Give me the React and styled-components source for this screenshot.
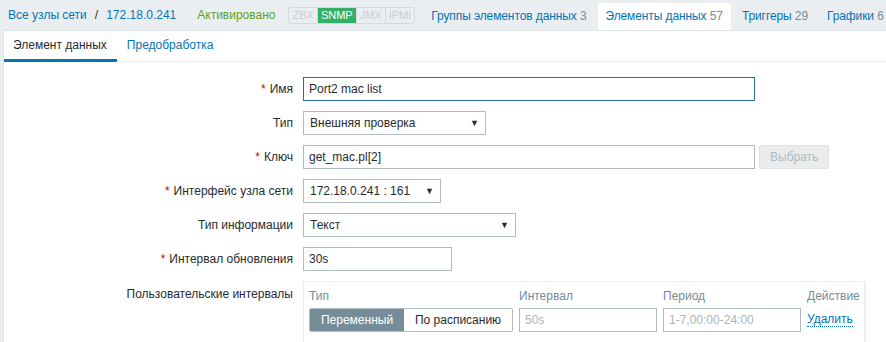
import React from 'react';
import styled, { createGlobalStyle } from 'styled-components';

const GlobalStyle = createGlobalStyle`
    body {
        margin: 0;
        background: #ebeef0;
        font-family: "Liberation Sans", Arial, sans-serif;
        font-size: 12px;
        color: #1f2c33;
    }
`

const badges = [
    { name: "ZBX", on: false },
    { name: "SNMP", on: true },
    { name: "JMX", on: false },
    { name: "IPMI", on: false },
];

const navItems = [
    { title: "Группы элементов данных", count: 3 },
    { title: "Элементы данных", count: 57, active: true },
    { title: "Триггеры", count: 29 },
    { title: "Графики", count: 6 },
];

const rows = [
    { label: "Имя", req: true, kind: "input", value: "Port2 mac list", width: 452, focus: true },
    { label: "Тип", kind: "select", value: "Внешняя проверка", width: 183 },
    { label: "Ключ", req: true, kind: "input", value: "get_mac.pl[2]", width: 452, button: "Выбрать" },
    { label: "Интерфейс узла сети", req: true, kind: "select", value: "172.18.0.241 : 161", width: 138 },
    { label: "Тип информации", kind: "select", value: "Текст", width: 213 },
    { label: "Интервал обновления", req: true, kind: "input", value: "30s", width: 149 },
];

class App extends React.Component {
    renderRow = (row) => (
        <React.Fragment key={row.label}>
            <Label>
                {row.req && <Star>*</Star>}
                {row.label}
            </Label>
            <Field>
                {row.kind === "input" ? (
                    <TextBox w={row.width} focus={row.focus} readOnly value={row.value} />
                ) : (
                    <Select w={row.width}>
                        <span>{row.value}</span>
                        <Arrow>▼</Arrow>
                    </Select>
                )}
                {row.button && <Button disabled>{row.button}</Button>}
            </Field>
        </React.Fragment>
    );

    render() {
        return (
            <>
                <GlobalStyle />
                <TopBar>
                    <Crumbs>
                        <Link>Все узлы сети</Link>
                        <Slash>/</Slash>
                        <Link>172.18.0.241</Link>
                    </Crumbs>
                    <Status>Активировано</Status>
                    <Badges>
                        {badges.map((b) => (
                            <Badge key={b.name} on={b.on}>{b.name}</Badge>
                        ))}
                    </Badges>
                    <Nav>
                        {navItems.map((n) => (
                            <NavItem key={n.title} active={n.active}>
                                {n.title} <Count>{n.count}</Count>
                            </NavItem>
                        ))}
                    </Nav>
                </TopBar>
                <Panel>
                    <Tabs>
                        <Tab active>Элемент данных</Tab>
                        <Tab>Предобработка</Tab>
                    </Tabs>
                    <Form>
                        {rows.map(this.renderRow)}
                        <Label top>Пользовательские интервалы</Label>
                        <Field>
                            <Intervals>
                                <Head>Тип</Head>
                                <Head>Интервал</Head>
                                <Head>Период</Head>
                                <Head>Действие</Head>
                                <Segment>
                                    <SegItem active>Переменный</SegItem>
                                    <SegItem>По расписанию</SegItem>
                                </Segment>
                                <TextBox w={138} placeholder="50s" readOnly />
                                <TextBox w={138} placeholder="1-7,00:00-24:00" readOnly />
                                <Remove>Удалить</Remove>
                            </Intervals>
                        </Field>
                    </Form>
                </Panel>
            </>
        )
    }
}

const TopBar = styled.div`
    display: flex;
    align-items: center;
    height: 30px;
    padding-left: 8px;
    white-space: nowrap;
    overflow: hidden;
`
const Crumbs = styled.div`
    display: flex;
    align-items: center;
`
const Link = styled.span`
    color: #0275b8;
`
const Slash = styled.span`
    margin: 0 8px;
    color: #1f2c33;
`
const Status = styled.span`
    color: #59a22b;
    margin-left: 21px;
`
const Badges = styled.div`
    display: flex;
    margin-left: 13px;
    border: 1px solid #d5d9dc;
    border-radius: 2px;
`
const Badge = styled.span`
    padding: 1px 3px;
    line-height: 13px;
    font-size: 11px;
    color: ${(p) => (p.on ? "#fff" : "#c8ced2")};
    background: ${(p) => (p.on ? "#34af67" : "transparent")};
    border-left: 1px solid #d5d9dc;
    &:first-child {
        border-left: none;
    }
`
const Nav = styled.div`
    display: flex;
    align-items: center;
    margin-left: 8px;
`
const NavItem = styled.span`
    color: #0275b8;
    padding: 0 8px;
    height: 27px;
    margin-top: 3px;
    line-height: 26px;
    margin-right: 3px;
    letter-spacing: -0.1px;
    background: ${(p) => (p.active ? "#fff" : "transparent")};
    border-radius: 2px 2px 0 0;
`
const Count = styled.span`
    color: #768d99;
`
const Panel = styled.div`
    margin-left: 3px;
    height: 312px;
    background: #fff;
    border: 1px solid #dfe4e7;
    border-right: none;
    border-bottom: none;
    box-sizing: border-box;
`
const Tabs = styled.div`
    display: flex;
    height: 30px;
    border-bottom: 1px solid #ebeef0;
`
const Tab = styled.div`
    padding: 0 10px 0 9px;
    margin-right: 1px;
    line-height: 28px;
    font-size: 12px;
    color: ${(p) => (p.active ? "#1f2c33" : "#0275b8")};
    border-bottom: 3px solid ${(p) => (p.active ? "#0275b8" : "transparent")};
    margin-bottom: -1px;
`
const Form = styled.div`
    display: grid;
    grid-template-columns: 289px auto;
    column-gap: 10px;
    row-gap: 10px;
    padding-top: 15px;
    align-items: center;
`
const Label = styled.div`
    text-align: right;
    align-self: ${(p) => (p.top ? "start" : "center")};
    margin-top: ${(p) => (p.top ? "6px" : "0")};
`
const Star = styled.span`
    color: #d40000;
    margin-right: 4px;
`
const Field = styled.div`
    display: flex;
    align-items: center;
    gap: 4px;
`
const TextBox = styled.input`
    box-sizing: border-box;
    width: ${(p) => p.w}px;
    height: 24px;
    padding: 0 5px;
    border: 1px solid ${(p) => (p.focus ? "#2b6e9e" : "#acbbc4")};
    font-family: "Liberation Sans", Arial, sans-serif;
    font-size: 12px;
    color: #1f2c33;
    outline: none;
    &::placeholder {
        color: #aab5bc;
    }
`
const Select = styled.div`
    box-sizing: border-box;
    width: ${(p) => p.w}px;
    height: 24px;
    padding: 0 6px;
    border: 1px solid #acbbc4;
    display: flex;
    align-items: center;
    justify-content: space-between;
`
const Arrow = styled.span`
    font-size: 9px;
    color: #1f2c33;
`
const Button = styled.button`
    height: 24px;
    padding: 0 10px;
    background: #ebebeb;
    border: 1px solid #dde1e3;
    border-radius: 2px;
    color: #acbbc4;
    font-family: "Liberation Sans", Arial, sans-serif;
    font-size: 12px;
`
const Intervals = styled.div`
    box-sizing: border-box;
    width: 563px;
    height: 70px;
    border: 1px solid #ebeef0;
    border-right-width: 2px;
    padding: 7px 5px 0;
    display: grid;
    grid-template-columns: 204px 138px 138px auto;
    column-gap: 6px;
    row-gap: 5px;
    align-items: center;
    align-content: start;
`
const Head = styled.div`
    color: #768d99;
    line-height: 14px;
`
const Segment = styled.div`
    display: flex;
    height: 24px;
    box-sizing: border-box;
    border: 1px solid #acbbc4;
    border-radius: 2px;
    overflow: hidden;
`
const SegItem = styled.div`
    display: flex;
    align-items: center;
    justify-content: center;
    width: ${(p) => (p.active ? "95px" : "109px")};
    background: ${(p) => (p.active ? "#768d99" : "#fff")};
    color: ${(p) => (p.active ? "#fff" : "#1f2c33")};
`
const Remove = styled.span`
    color: #0275b8;
    justify-self: start;
    border-bottom: 1px dotted #0275b8;
    line-height: 13px;
`

export default App;
